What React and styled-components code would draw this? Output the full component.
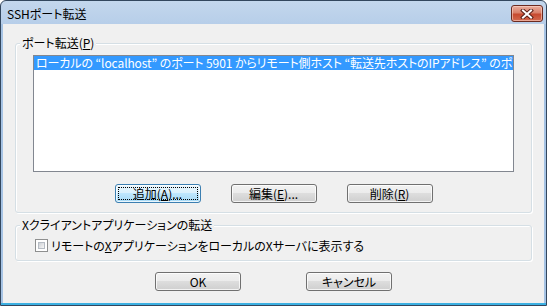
import React from 'react';
import styled, { createGlobalStyle } from 'styled-components';

const GlobalStyle = createGlobalStyle`
  html, body { margin: 0; padding: 0; background: #fff; }
  body {
    font-family: "Noto Sans CJK JP", "Noto Sans", sans-serif;
    font-size: 12px;
    color: #000;
  }
`;

const Window = styled.div`
  width: 547px;
  height: 306px;
  box-sizing: border-box;
  display: flex;
  flex-direction: column;
  border: 1px solid #33475e;
  border-radius: 6px 6px 0 0;
  padding: 0 2px 2px;
  background: linear-gradient(
    to bottom,
    #c3d7ed 0,
    #b7cee9 23px,
    #a6c3e4 23px,
    #a6c3e4 calc(100% - 2px),
    #3cb0e2 calc(100% - 2px)
  );
  font-feature-settings: "palt";
`;

const TitleBar = styled.div`
  height: 23px;
  display: flex;
  align-items: flex-start;
  justify-content: space-between;
  padding-left: 4px;
`;

const Title = styled.span`
  margin-top: 6px;
  font-size: 12px;
  line-height: 13px;
  color: #000;
`;

const CloseButton = styled.div`
  width: 32px;
  height: 17px;
  margin-top: 4px;
  margin-right: 1px;
  box-sizing: border-box;
  border: 1px solid #6b2a20;
  border-radius: 3px;
  background: linear-gradient(#e9ad9d 0%, #d9806a 45%, #c7492f 55%, #d36a50 100%);
  box-shadow: inset 0 0 0 1px rgba(255, 220, 210, 0.55);
  display: flex;
  align-items: center;
  justify-content: center;
`;

const Client = styled.div`
  flex: 1;
  background: #f0f0f0;
  display: flex;
  flex-direction: column;
  padding: 12px 12px 12px;
`;

const GroupBox = styled.div`
  display: flex;
  flex-direction: column;
  margin-top: ${p => p.$gap}px;
  padding: 0 17px ${p => p.$bottom}px 19px;
  padding-left: ${p => p.$left}px;
  border: 1px solid #d5dfe5;
  border-radius: 3px;
  box-shadow: inset 1px 1px 0 #fff, 1px 1px 0 #fff;
`;

const GroupLabel = styled.span`
  align-self: flex-start;
  height: 14px;
  line-height: 14px;
  margin-top: -8px;
  margin-left: ${p => 4 - p.$left}px;
  padding: 0 2px;
  background: #f0f0f0;
  white-space: nowrap;
`;

const ListBox = styled.div`
  margin-top: 5px;
  height: 117px;
  box-sizing: border-box;
  border: 1px solid #828790;
  background: #fff;
  padding: 0;
  overflow: hidden;
`;

const ListItem = styled.div`
  height: 14px;
  line-height: 14px;
  padding-left: 2px;
  white-space: nowrap;
  overflow: hidden;
  letter-spacing: -0.1px;
  background: ${p => (p.$selected ? '#3399ff' : 'transparent')};
  color: ${p => (p.$selected ? '#fff' : '#000')};
`;

const ButtonRow = styled.div`
  display: flex;
  justify-content: center;
  gap: ${p => p.$gap}px;
  margin-top: ${p => p.$top}px;
`;

const Button = styled.button`
  width: 86px;
  height: 19px;
  box-sizing: border-box;
  padding: 0;
  margin: 0;
  font-family: inherit;
  font-size: 12px;
  line-height: 17px;
  color: #000;
  border: 1px solid ${p => (p.$focused ? '#3c7fb1' : '#707070')};
  border-radius: 3px;
  background: ${p =>
    p.$focused
      ? 'linear-gradient(#eaf6fd 0%, #d9f0fc 50%, #bee6fd 50%, #a7d9f5 100%)'
      : 'linear-gradient(#f2f2f2 0%, #ebebeb 50%, #dddddd 50%, #cfcfcf 100%)'};
  box-shadow: inset 0 0 0 1px rgba(255, 255, 255, 0.75);
  outline: ${p => (p.$focused ? '1px dotted #000' : 'none')};
  outline-offset: -4px;
  font-feature-settings: "palt";
  u { text-underline-offset: 1px; }
`;

const CheckRow = styled.label`
  display: flex;
  align-items: center;
  gap: 3px;
  height: 13px;
  margin-top: 7px;
  line-height: 13px;
  white-space: nowrap;
  u { text-underline-offset: 1px; }
`;

const CheckBox = styled.span`
  width: 13px;
  height: 13px;
  box-sizing: border-box;
  flex: none;
  border: 1px solid #8e8f8f;
  background: #fff;
  padding: 2px;
  display: flex;
`;

const CheckInner = styled.span`
  flex: 1;
  border: 1px solid #b6bcc4;
  background: linear-gradient(135deg, #cdd1d6 0%, #e6e7e9 60%, #f7f7f7 100%);
`;

const CloseGlyph = () => (
  <svg width="14" height="10" viewBox="0 0 14 10">
    <path d="M3 1.5 L11 8.5 M11 1.5 L3 8.5" stroke="#5a2018" strokeWidth="4" strokeLinecap="square" />
    <path d="M3 1.5 L11 8.5 M11 1.5 L3 8.5" stroke="#fff" strokeWidth="2" strokeLinecap="square" />
  </svg>
);

export default function App() {
  return (
    <>
      <GlobalStyle />
      <Window>
        <TitleBar>
          <Title>SSHポート転送</Title>
          <CloseButton>
            <CloseGlyph />
          </CloseButton>
        </TitleBar>
        <Client>
          <GroupBox $gap={7} $bottom={9} $left={17}>
            <GroupLabel $left={17}>
              ポート転送(<u>P</u>)
            </GroupLabel>
            <ListBox>
              <ListItem $selected>
                ローカルの “localhost” のポート 5901 からリモート側ホスト “転送先ホストのIPアドレス” のポート 5901 へ
              </ListItem>
            </ListBox>
            <ButtonRow $gap={30} $top={12}>
              <Button $focused>
                追加(<u>A</u>)...
              </Button>
              <Button>
                編集(<u>E</u>)...
              </Button>
              <Button>
                削除(<u>R</u>)
              </Button>
            </ButtonRow>
          </GroupBox>
          <GroupBox $gap={12} $bottom={8} $left={19}>
            <GroupLabel $left={19}>Xクライアントアプリケーションの転送</GroupLabel>
            <CheckRow>
              <CheckBox>
                <CheckInner />
              </CheckBox>
              <span>
                リモートの<u>X</u>アプリケーションをローカルのXサーバに表示する
              </span>
            </CheckRow>
          </GroupBox>
          <ButtonRow $gap={65} $top={11}>
            <Button>OK</Button>
            <Button>キャンセル</Button>
          </ButtonRow>
        </Client>
      </Window>
    </>
  );
}
